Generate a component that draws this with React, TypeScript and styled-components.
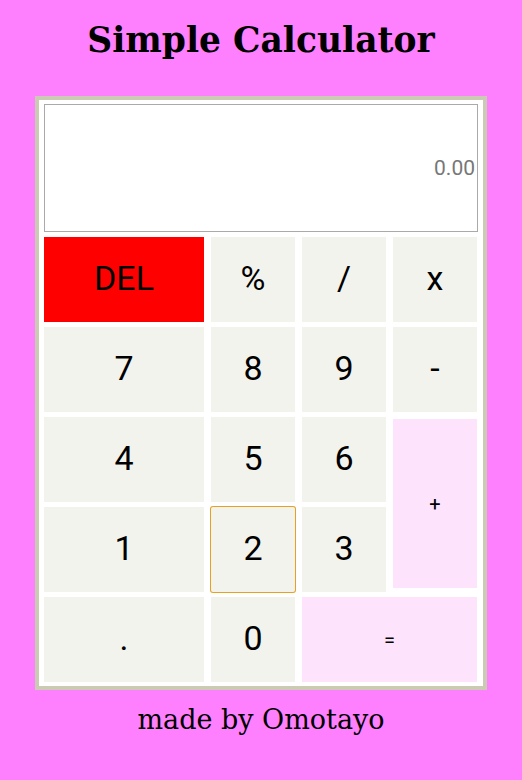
import React from "react";
import styled, { createGlobalStyle } from "styled-components";

const Global = createGlobalStyle`
  html, body { margin: 0; padding: 0; background: #ff80ff; }
  body { font-family: "DejaVu Serif", serif; }
`;

const Page = styled.div`
  display: flex;
  flex-direction: column;
  align-items: center;
  padding-top: 14px;
`;

const Title = styled.h1`
  margin: 0;
  font-family: "DejaVu Serif", serif;
  font-weight: bold;
  font-size: 34.5px;
  line-height: 52px;
  color: #000;
`;

const Calculator = styled.div`
  margin-top: 30px;
  box-sizing: border-box;
  width: 452px;
  border: 4px solid #cbcbb4;
  background: #fff;
  padding: 4px 5px;
  display: flex;
  flex-direction: column;
  gap: 5px;
`;

const Display = styled.div`
  height: 128px;
  box-sizing: border-box;
  border: 1px solid #aaaaaa;
  display: flex;
  align-items: center;
  justify-content: flex-end;
  padding-right: 2px;
  font-family: Roboto, sans-serif;
  font-size: 21px;
  color: #777;
`;

const Keys = styled.div`
  display: grid;
  grid-template-columns: 160px 84px 84px 84px;
  grid-auto-rows: 85px;
  column-gap: 7px;
  row-gap: 5px;
`;

type Variant = "num" | "del" | "op";

const Key = styled.button<{ $variant?: Variant; $small?: boolean; $focus?: boolean; $col?: string; $row?: string }>`
  border: none;
  margin: 0;
  padding: 0 0 ${(p) => (p.$small ? "0" : "4px")};
  font-family: Roboto, sans-serif;
  font-size: ${(p) => (p.$small ? "20px" : "34px")};
  color: #000;
  background: ${(p) =>
    p.$variant === "del" ? "#ff0000" : p.$variant === "op" ? "#fde4fc" : "#f3f3ee"};
  grid-column: ${(p) => p.$col ?? "auto"};
  grid-row: ${(p) => p.$row ?? "auto"};
  border-radius: ${(p) => (p.$focus ? "2px" : "0")};
  box-shadow: ${(p) => (p.$focus ? "0 0 0 1px #e8a020" : "none")};
  display: flex;
  align-items: center;
  justify-content: center;
`;

const PlusKey = styled(Key)`
  margin: 2px 0 4px;
`;

const Footer = styled.p`
  margin: 14px 0 0;
  font-family: "DejaVu Serif", serif;
  font-size: 27px;
  color: #000;
`;

export default function App() {
  return (
    <>
      <Global />
      <Page>
        <Title>Simple Calculator</Title>
        <Calculator>
          <Display>0.00</Display>
          <Keys>
            <Key $variant="del">DEL</Key>
            <Key>%</Key>
            <Key>/</Key>
            <Key>x</Key>
            <Key>7</Key>
            <Key>8</Key>
            <Key>9</Key>
            <Key>-</Key>
            <Key>4</Key>
            <Key>5</Key>
            <Key>6</Key>
            <PlusKey $variant="op" $small $row="span 2">+</PlusKey>
            <Key>1</Key>
            <Key $focus>2</Key>
            <Key>3</Key>
            <Key>.</Key>
            <Key>0</Key>
            <Key $variant="op" $small $col="span 2">=</Key>
          </Keys>
        </Calculator>
        <Footer>made by Omotayo</Footer>
      </Page>
    </>
  );
}
